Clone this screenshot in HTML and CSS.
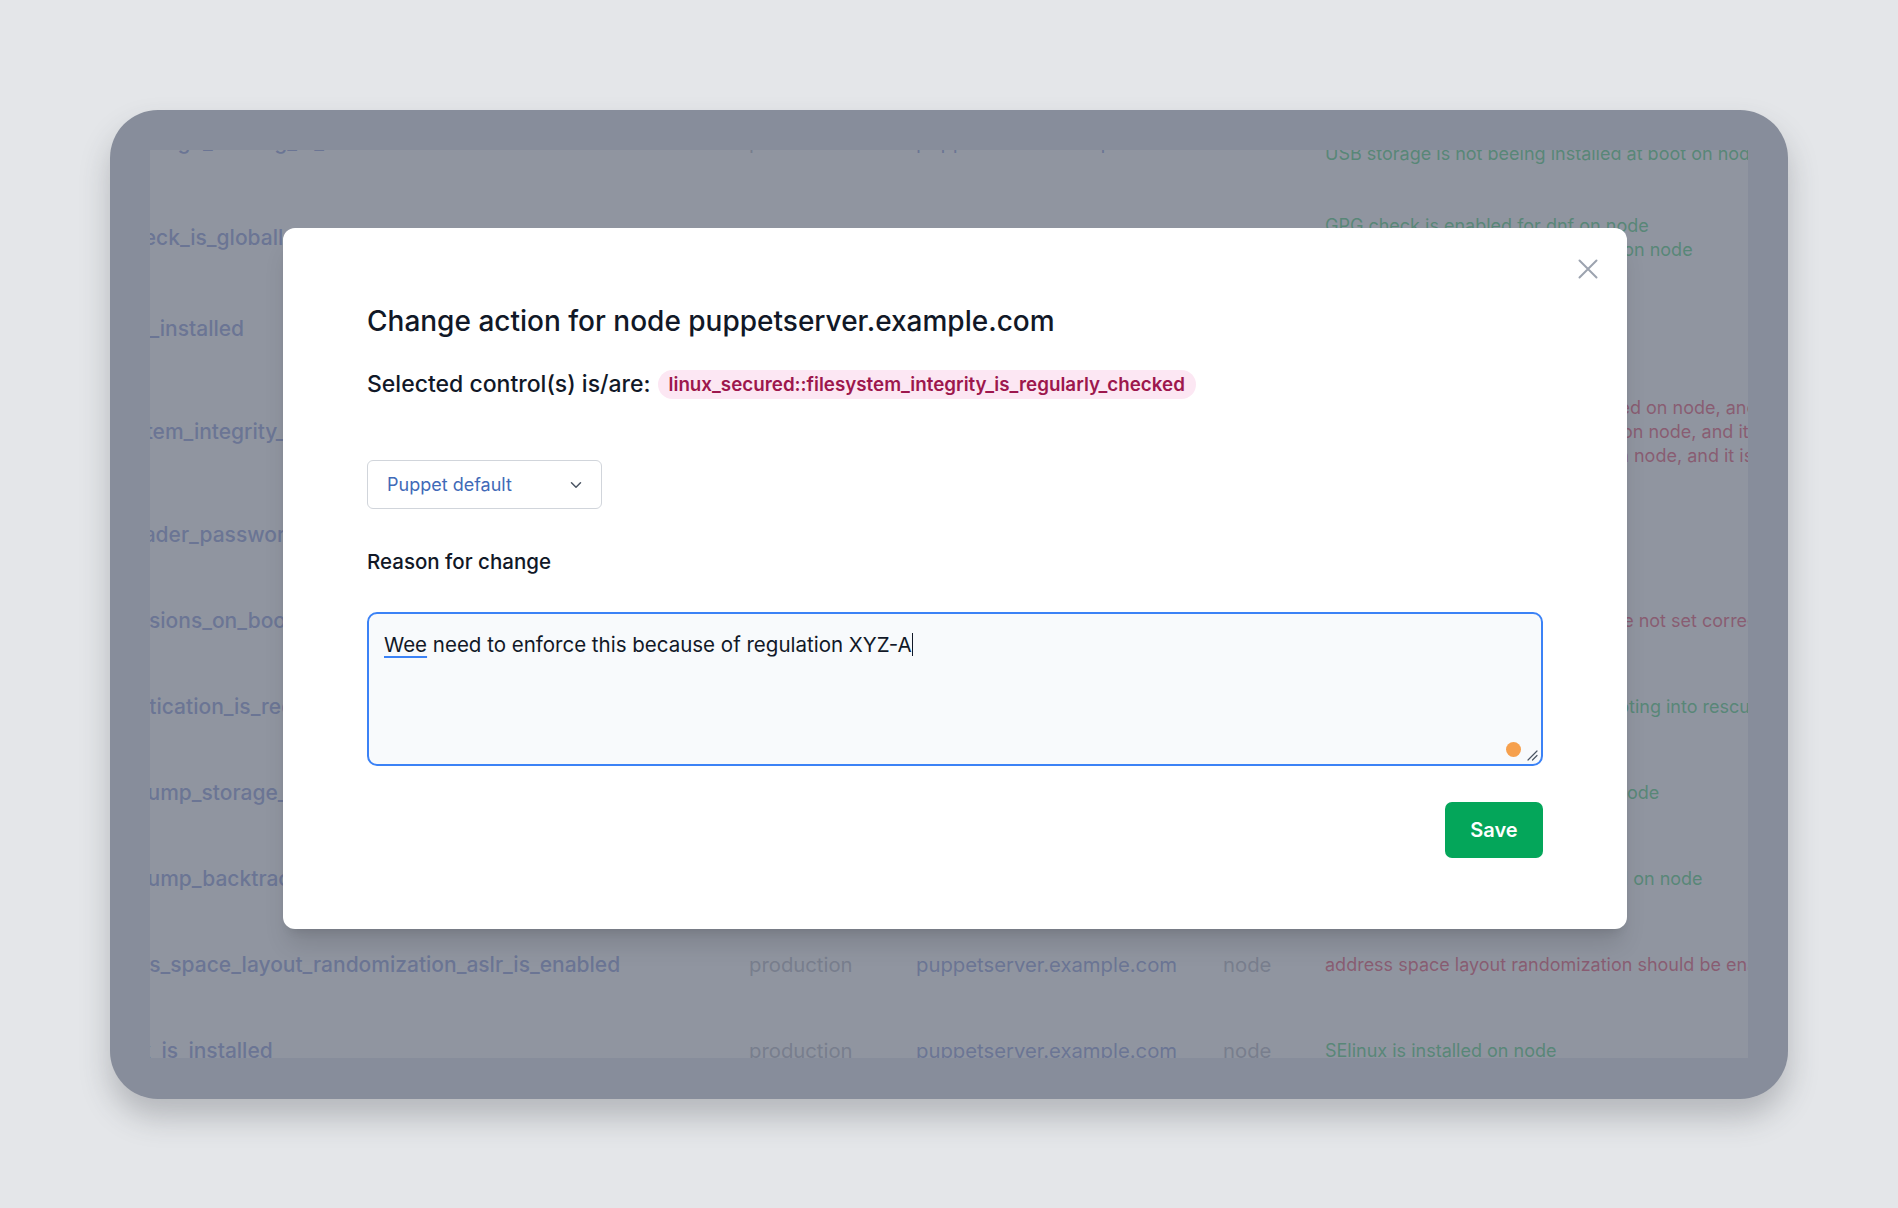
FILE: index.html
```html
<!DOCTYPE html>
<html lang="en">
<head>
<meta charset="utf-8">
<title>Change action</title>
<link rel="stylesheet" href="styles.css">
</head>
<body>
<div class="frame">
  <div class="screen">
    <div class="table">
      <div class="cell name">usb_storage_loading_is_disabled</div>
      <div class="cell env">production</div>
      <div class="cell host">puppetserver.example.com</div>
      <div class="cell type">node</div>
      <div class="cell desc ok"><span>USB storage module is disabled on node</span><span>USB storage is not beeing installed at boot on node</span></div>

      <div class="cell name">gpgcheck_is_globally_activated</div>
      <div class="cell env">production</div>
      <div class="cell host">puppetserver.example.com</div>
      <div class="cell type">node</div>
      <div class="cell desc ok"><span>GPG check is enabled for dnf on node</span><span>GPG check is enabled for all repos on node</span></div>

      <div class="cell name">aide_is_installed</div>
      <div class="cell env">production</div>
      <div class="cell host">puppetserver.example.com</div>
      <div class="cell type">node</div>
      <div class="cell desc ok"><span>AIDE is installed on node</span></div>

      <div class="cell name">filesystem_integrity_is_regularly_checked</div>
      <div class="cell env">production</div>
      <div class="cell host">puppetserver.example.com</div>
      <div class="cell type">node</div>
      <div class="cell desc bad"><span>AIDE not installed and not configured on node, and it is not scheduled</span><span>AIDE database is not initialized yet on node, and it is not run</span><span>Filesystem check not configured on node, and it is not run</span></div>

      <div class="cell name">bootloader_password_is_set</div>
      <div class="cell env">production</div>
      <div class="cell host">puppetserver.example.com</div>
      <div class="cell type">node</div>
      <div class="cell desc ok"><span>Bootloader password is set</span></div>

      <div class="cell name">permissions_on_bootloader_config_are_configured</div>
      <div class="cell env">production</div>
      <div class="cell host">puppetserver.example.com</div>
      <div class="cell type">node</div>
      <div class="cell desc bad"><span>Permission on bootloader config are not set correctly on node</span></div>

      <div class="cell name">authentication_is_required_for_single_user_mode</div>
      <div class="cell env">production</div>
      <div class="cell host">puppetserver.example.com</div>
      <div class="cell type">node</div>
      <div class="cell desc ok"><span>Authentication is required upon booting into rescue mode on node</span></div>

      <div class="cell name">core_dump_storage_is_disabled</div>
      <div class="cell env">production</div>
      <div class="cell host">puppetserver.example.com</div>
      <div class="cell type">node</div>
      <div class="cell desc ok"><span>Core dump storage is disabled on node</span></div>

      <div class="cell name">core_dump_backtraces_are_disabled</div>
      <div class="cell env">production</div>
      <div class="cell host">puppetserver.example.com</div>
      <div class="cell type">node</div>
      <div class="cell desc ok"><span>Core dump backtraces are disabled on node</span></div>

      <div class="cell name">address_space_layout_randomization_aslr_is_enabled</div>
      <div class="cell env">production</div>
      <div class="cell host">puppetserver.example.com</div>
      <div class="cell type">node</div>
      <div class="cell desc bad"><span>address space layout randomization should be enabled on node</span></div>

      <div class="cell name">selinux_is_installed</div>
      <div class="cell env">production</div>
      <div class="cell host">puppetserver.example.com</div>
      <div class="cell type">node</div>
      <div class="cell desc ok"><span>SElinux is installed on node</span></div>
    </div>

    <div class="backdrop"></div>

    <div class="modal" role="dialog" aria-labelledby="modal-title">
      <button class="close" aria-label="Close">
        <svg width="20" height="20" viewBox="0 0 20 20" fill="none" stroke="currentColor" stroke-width="2" stroke-linecap="round"><path d="M1.5 1.5 L18.5 18.5 M18.5 1.5 L1.5 18.5"/></svg>
      </button>
      <h2 id="modal-title" class="title">Change action for node puppetserver.example.com</h2>
      <div class="selected">
        <span class="selected-label">Selected control(s) is/are:</span>
        <span class="badge">linux_secured::filesystem_integrity_is_regularly_checked</span>
      </div>
      <div class="select">
        <span>Puppet default</span>
        <svg width="12" height="8" viewBox="0 0 12 8" fill="none" stroke="#4b5563" stroke-width="1.5" stroke-linecap="round" stroke-linejoin="round"><path d="M1.5 1.8 L6 6.2 L10.5 1.8"/></svg>
      </div>
      <div class="label">Reason for change</div>
      <div class="textarea">
        <span class="spell">Wee</span> need to enforce this because of regulation XYZ-A<span class="caret"></span>
        <span class="dot"></span>
        <svg class="grip" width="12" height="12" viewBox="0 0 12 12" fill="none" stroke="#4b5563" stroke-width="1.2" stroke-linecap="round"><path d="M11 2 L2 11 M11 6.5 L6.5 11"/></svg>
      </div>
      <div class="actions">
        <button class="save">Save</button>
      </div>
    </div>
  </div>
</div>
</body>
</html>
```
FILE: styles.css
```css
* { box-sizing: border-box; }

html, body {
  margin: 0;
  height: 100%;
}

body {
  background: #e4e6e9;
  padding: 110px 110px 109px 110px;
  font-family: Inter, "Noto Sans", "Liberation Sans", sans-serif;
}

.frame {
  height: 989px;
  background: #878d9b;
  border-radius: 48px;
  padding: 40px 40px 41px 40px;
  box-shadow: 0 18px 30px rgba(60, 64, 72, 0.28);
}

.screen {
  position: relative;
  height: 100%;
  overflow: hidden;
  background: #ffffff;
}

/* background table (scrolled) */
.table {
  display: grid;
  grid-template-columns: 669px 167px 307px 102px max-content;
  align-items: center;
  margin-top: -56px;
  margin-left: -70px;
  white-space: nowrap;
}

.cell {
  font-size: 20.3px;
  line-height: 24px;
}

.name {
  padding: 31px 0;
  font-size: 21px;
  font-weight: 500;
  color: #6b80cf;
}

.env, .type {
  color: #9ea2b3;
}

.host {
  color: #6b80cf;
}

.desc {
  display: flex;
  flex-direction: column;
  padding: 24px 0;
  font-size: 18px;
  line-height: 24px;
}

.desc.ok { color: #22c55e; }
.desc.bad { color: #e11d48; }

.backdrop {
  position: absolute;
  inset: 0;
  background: rgba(107, 114, 128, 0.75);
}

/* modal */
.modal {
  position: absolute;
  left: 133px;
  top: 78px;
  width: 1344px;
  background: #ffffff;
  border-radius: 12px;
  padding: 77px 84px 71px 84px;
  box-shadow: 0 20px 25px -5px rgba(0, 0, 0, 0.12), 0 8px 10px -6px rgba(0, 0, 0, 0.1);
  color: #111827;
}

.close {
  position: absolute;
  top: 31px;
  right: 29px;
  width: 20px;
  height: 20px;
  padding: 0;
  border: 0;
  background: none;
  color: #9ca3af;
  display: flex;
}

.title {
  margin: 0;
  font-size: 28px;
  line-height: 32px;
  font-weight: 500;
}

.selected {
  margin-top: 17px;
  display: flex;
  align-items: center;
  gap: 7px;
  height: 60px;
}

.selected-label {
  font-size: 23px;
  font-weight: 500;
}

.badge {
  background: #fce7f3;
  color: #9d174d;
  border-radius: 15px;
  padding: 0 11px;
  height: 29px;
  display: inline-flex;
  align-items: center;
  font-size: 18.8px;
  font-weight: 600;
}

.select {
  margin-top: 46px;
  width: 235px;
  height: 49px;
  border: 1px solid #d1d5db;
  border-radius: 6px;
  display: flex;
  align-items: center;
  justify-content: space-between;
  padding: 0 19px 0 19px;
  color: #3f6ab8;
  font-size: 18px;
}

.label {
  margin-top: 41px;
  font-size: 20.5px;
  line-height: 24px;
  font-weight: 500;
}

.textarea {
  position: relative;
  margin-top: 38px;
  height: 154px;
  border: 2px solid #3b82f6;
  border-radius: 10px;
  background: #f8fafc;
  padding: 18px 15px;
  font-size: 20.5px;
  line-height: 26px;
  color: #111827;
}

.spell {
  text-decoration: underline;
  text-decoration-color: #3b82f6;
  text-decoration-thickness: 2px;
  text-underline-offset: 4px;
}

.caret {
  display: inline-block;
  width: 1.5px;
  height: 23px;
  background: #111827;
  vertical-align: -4px;
}

.dot {
  position: absolute;
  right: 20px;
  bottom: 7px;
  width: 15px;
  height: 15px;
  border-radius: 50%;
  background: #f6a04d;
}

.grip {
  position: absolute;
  right: 3px;
  bottom: 3px;
}

.actions {
  margin-top: 36px;
  display: flex;
  justify-content: flex-end;
}

.save {
  width: 98px;
  height: 56px;
  border: 0;
  border-radius: 7px;
  background: #04a65a;
  color: #ffffff;
  font-family: inherit;
  font-size: 20px;
  font-weight: 600;
}
```
